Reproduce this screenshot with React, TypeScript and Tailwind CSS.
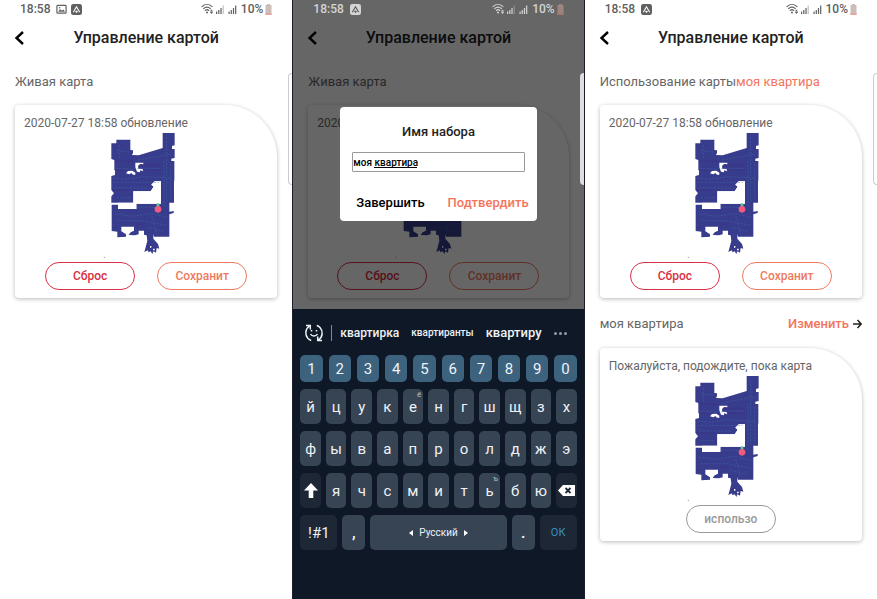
import type { ReactNode } from "react";
import clsx from "clsx";

function FloorMap() {
  return (
    <svg viewBox="330 94 201 366" className="mx-auto block h-[122px] w-[67px] overflow-visible" role="img" aria-label="Карта">
      <path
        fill="#383c8c"
        fillRule="evenodd"
        d="M349 117H391V148L399 149V157L396 163L416 164L488 142V97H524V134L516 136V145H524V172L514 174V181H523V240H522V306H508V333L521 331V337L508 341V408H462L460 400V414L474 430L478 444L470 442L468 456L460 452L457 460L452 452L445 455L444 449L433 454L438 436L442 420L440 404L432 402V390H416V401L405 404L386 403L392 395L402 390V378H364V392L378 401V408L352 410V393L335 391V312H354V325H409V309H483V242H464L454 252L461 258L452 272H400V306H334V287L342 278L334 268V226L345 223V208H343V178L334 175V128H349ZM406 186V200L411 213L420 215V209L430 212L428 205L415 204L414 196L420 190L430 191V186ZM378 218L384 211L397 210L406 216V222H399L394 217L388 221Z"
      />
      <path d="M483 242V309H409V325H354V306H400V272H452L461 258 454 252 464 242Z" fill="#fff" />
      <g fill="none" stroke="#3f70a6" strokeWidth="2" opacity=".65">
        <path d="M340 245H475M345 262H440M350 291H392M340 232L380 236L430 228L512 232M415 178L484 165L515 160M500 110V300M492 180V318M512 190V292M350 150L388 155M345 340L400 347L450 338L502 350M350 360H430L500 374M412 320H475M455 345L470 400M440 380L490 392M358 132V174M346 204H480" strokeDasharray="7 4" />
      </g>
      <g fill="none" stroke="#43257b" strokeWidth="3" opacity=".7">
        <path d="M344 182H400M344 208L372 209M420 194H478M428 208H482M339 268H390M440 436L466 440M338 380H350M410 370H434" strokeDasharray="5 3" />
      </g>
      <path d="M470 308H478V320H470Z" fill="#65c59b" />
      <circle cx="474" cy="326" r="10" fill="#f15b7e" />
      <path d="M450 436h4v5h-4zM459 444h5v5h-5z" fill="#fff" />
      <circle cx="313" cy="470" r="2" fill="#999" />
    </svg>
  );
}

function AppBadge() {
  return (
    <svg viewBox="0 0 12 12" className="size-[11px]" aria-hidden="true">
      <rect width="12" height="12" rx="2.5" fill="currentColor" />
      <path d="M2.5 9 6 3l3.5 6M5 7.5 6 9l1-1.5" fill="none" stroke="var(--color-badge, #fff)" strokeWidth="1.2" />
    </svg>
  );
}

function PictureIcon() {
  return (
    <svg viewBox="0 0 12 12" className="size-[11px]" aria-hidden="true">
      <rect x="1" y="1.5" width="10" height="8.5" rx=".8" fill="none" stroke="currentColor" strokeWidth="1.3" />
      <path d="m2.5 8.5 2-3 1.8 1.8L8 6l1.8 2.5Z" fill="currentColor" />
      <circle cx="4" cy="4" r=".8" fill="currentColor" />
    </svg>
  );
}

function SignalIcons() {
  return (
    <svg viewBox="0 0 38 12" className="h-3 w-[38px]" aria-hidden="true">
      <g fill="none" stroke="currentColor" strokeWidth="1.1" strokeLinecap="round">
        <path d="M1 3.6C4 .8 8 .8 11 3.6M2.6 5.6c2-2 4.8-2 6.8 0M4.3 7.5c1-1 2.4-1 3.4 0" />
      </g>
      <circle cx="6" cy="9.4" r="1" fill="currentColor" />
      <path d="m10.5 6.5 1.6 2h-3.2zM10.5 11l1.6-2h-3.2z" fill="currentColor" />
      <path d="M15 8.5h1.2V11H15zM17.2 7h1.2v4h-1.2zM19.4 5h1.2v6h-1.2z" fill="currentColor" />
      <path d="M21.6 2.5h1.2V11h-1.2z" fill="currentColor" opacity=".4" />
      <path d="M27.5 8.5h1.2V11h-1.2zM29.7 7h1.2v4h-1.2zM31.9 5h1.2v6h-1.2zM34.1 2.5h1.2V11h-1.2z" fill="currentColor" />
    </svg>
  );
}

function StatusBar({ picture, light }: { picture?: boolean; light?: boolean }) {
  return (
    <div
      className={clsx(
        "relative z-10 flex h-[18px] items-center px-5 text-[12px] leading-[18px] font-medium",
        light ? "text-[#d4d4d4] [--color-badge:#555]" : "text-[#606060]",
      )}
    >
      <span className="mr-1.5">18:58</span>
      <span className="flex gap-1">
        {picture && <PictureIcon />}
        <AppBadge />
      </span>
      <span className="ml-auto flex items-center gap-0.5">
        <SignalIcons />
        <span>10%</span>
        <svg viewBox="0 0 7 11" className="h-[11px] w-[7px]" aria-hidden="true">
          <path d="M2 0h3v1h1.500v10h-6V1H2z" fill={light ? "#9c8580" : "#cdbdb9"} />
          <path d="M.5 9h6v2h-6z" fill={light ? "#a9776c" : "#e3a79f"} />
        </svg>
      </span>
    </div>
  );
}

function TitleBar() {
  return (
    <header className="relative flex h-10 items-center justify-center">
      <button type="button" aria-label="Назад" className="absolute left-3.5 text-black">
        <svg viewBox="0 0 11 16" className="h-4 w-[11px]" aria-hidden="true">
          <path d="M9 2 2.500 8 9 14" fill="none" stroke="currentColor" strokeWidth="2.4" />
        </svg>
      </button>
      <h1 className="text-[16px] leading-6 font-medium text-[#222]">Управление картой</h1>
    </header>
  );
}

const tones = {
  red: "border-[#d92f43] text-[#d92f43]",
  orange: "border-[#ee7a60] text-[#ee7a60]",
  gray: "border-[#999] text-[#999]",
};

function PillButton({ tone, children }: { tone: keyof typeof tones; children: ReactNode }) {
  return (
    <button type="button" className={clsx("h-7 w-[90px] rounded-full border text-[12px] leading-5 font-medium", tones[tone])}>
      {children}
    </button>
  );
}

function MapCard({ caption, children }: { caption: string; children: ReactNode }) {
  return (
    <section className="rounded-[4px] rounded-tr-[52px] bg-white pt-[9px] pb-2 shadow-[0_1px_4px_rgba(0,0,0,0.28)]">
      <p className="pl-[9px] text-[12px] leading-[18px] text-[#666]">{caption}</p>
      <div className="pr-1.5">
        <FloorMap />
      </div>
      <div className="mt-2 flex justify-center gap-[22px]">{children}</div>
    </section>
  );
}

function LiveCard() {
  return (
    <MapCard caption="2020-07-27 18:58 обновление">
      <PillButton tone="red">Сброс</PillButton>
      <PillButton tone="orange">Сохранит</PillButton>
    </MapCard>
  );
}

function Screen({ label, picture, light, children }: { label: ReactNode; picture?: boolean; light?: boolean; children?: ReactNode }) {
  return (
    <>
      <StatusBar picture={picture} light={light} />
      <TitleBar />
      <div className="px-[15px] pb-[11px]">
        <h2 className="mt-3 mb-[11px] text-[13px] leading-6 whitespace-nowrap text-[#666]">{label}</h2>
        <LiveCard />
        {children}
      </div>
    </>
  );
}

function EdgeHandle({ className }: { className: string }) {
  return <div className={clsx("absolute top-[73px] right-0 z-10 h-28 w-1 rounded-l-[4px]", className)} />;
}

function NameDialog() {
  return (
    <div role="dialog" aria-labelledby="set-name" className="absolute inset-x-[47px] top-[107px] rounded-[4px] bg-white px-3 pt-[15px] pb-1.5">
      <label id="set-name" htmlFor="name" className="block text-center text-[13px] leading-5 font-medium text-[#222]">
        Имя набора
      </label>
      <div className="relative mt-2.5">
        <input
          id="name"
          defaultValue="моя квартира"
          className="block h-5 w-full rounded-[1px] border border-[#999] text-[10px] leading-4 font-medium text-black outline-none"
        />
        <span className="absolute top-[15px] left-[22px] h-px w-[43px] bg-black" />
      </div>
      <div className="mt-[19px] flex justify-between text-[13px] leading-6 font-medium">
        <button type="button" className="ml-1 text-black">Завершить</button>
        <button type="button" className="-mr-1 text-[#f4745c]">Подтвердить</button>
      </div>
    </div>
  );
}

const digits = [..."1234567890"];
const rows = [[..."йцукенгшщзх"], [..."фывапролджэ"], [..."ячсмитьбю"]];
const hints: Record<string, string> = { е: "ё", ь: "ъ" };

function Key({ children, className, label }: { children: ReactNode; className?: string; label?: string }) {
  return (
    <button
      type="button"
      aria-label={label}
      className={clsx("relative flex h-[35px] min-w-0 items-center justify-center rounded-[5px] text-[15px] leading-4", className)}
    >
      {children}
    </button>
  );
}

function LetterKey({ letter }: { letter: string }) {
  return (
    <Key className="flex-1 bg-[#364454]">
      {letter}
      {hints[letter] && <span className="absolute top-0.5 right-0.5 text-[8px] leading-[7px] text-[#b8c0c8]">{hints[letter]}</span>}
    </Key>
  );
}

function Keyboard() {
  return (
    <div className="flex-1 bg-[#0e1826] px-[7px] text-[#eef2f6]">
      <div className="flex h-[46px] items-center pt-0.5 pl-1 font-medium">
        <button type="button" aria-label="Эмодзи">
          <svg viewBox="0 0 20 20" className="size-5" fill="none" stroke="currentColor" strokeWidth="1.5" aria-hidden="true">
            <path d="M5.500 3C1 6 .8 12 4 15.500c1 1 2 1.600 3.200 2M2 2.500h4.300v4M14.500 17c4.500-3 4.700-9 1.500-12.500-1-1-2-1.600-3.200-2M18 17.500h-4.300v-4" />
            <path d="M6.500 11c1.500 2.600 5.500 2.600 7 0" />
            <path d="M7.500 7v1.500M12.500 7v1.500" />
          </svg>
        </button>
        <span className="ml-[7px] h-4 w-px bg-[#7d8690]" />
        <div className="ml-2 flex flex-1 items-center justify-between pr-2.5 leading-5">
          <button type="button" className="text-[12px]">квартирка</button>
          <button type="button" className="text-[10px]">квартиранты</button>
          <button type="button" className="text-[13px]">квартиру</button>
          <button type="button" aria-label="Ещё" className="flex gap-0.5">
            <span className="size-[3px] rounded-full bg-[#929ba5]" />
            <span className="size-[3px] rounded-full bg-[#929ba5]" />
            <span className="size-[3px] rounded-full bg-[#929ba5]" />
          </button>
        </div>
      </div>
      <div className="flex gap-1.5">
        {digits.map((d) => (
          <button key={d} type="button" className="h-[27px] min-w-0 flex-1 rounded-[5px] bg-[#3c627e] text-[15px] leading-5">
            {d}
          </button>
        ))}
      </div>
      <div className="mt-[7px] flex flex-col gap-[7px]">
        <div className="flex gap-[5px]">{rows[0].map((l) => <LetterKey key={l} letter={l} />)}</div>
        <div className="flex gap-[5px]">{rows[1].map((l) => <LetterKey key={l} letter={l} />)}</div>
        <div className="flex gap-[5px]">
          <Key className="flex-1 bg-[#1d2736]" label="Shift">
            <svg viewBox="0 0 14 15" className="h-[15px] w-3.5" aria-hidden="true">
              <path d="M7 0 14 7.500H9.300V15H4.700V7.500H0z" fill="#fff" />
            </svg>
          </Key>
          {rows[2].map((l) => <LetterKey key={l} letter={l} />)}
          <Key className="flex-1 bg-[#1d2736]" label="Удалить">
            <svg viewBox="0 0 17 11" className="h-[11px] w-[17px]" aria-hidden="true">
              <path d="M5 0h12v11H5L0 5.500z" fill="#fff" />
              <path d="m7.500 3 5 5m0-5-5 5" stroke="#1d2736" strokeWidth="1.800" />
            </svg>
          </Key>
        </div>
        <div className="flex gap-[5px]">
          <Key className="w-[37px] bg-[#1d2736]">!#1</Key>
          <Key className="w-[23px] bg-[#364454] font-bold">,</Key>
          <Key className="flex-1 gap-1.5 bg-[#364454]">
            <svg viewBox="0 0 4 6" className="h-1.5 w-1" aria-hidden="true"><path d="M4 0v6L0 3z" fill="#fff" /></svg>
            <span className="text-[10px]">Русский</span>
            <svg viewBox="0 0 4 6" className="h-1.5 w-1" aria-hidden="true"><path d="M0 0v6l4-3z" fill="#fff" /></svg>
          </Key>
          <Key className="w-[23px] bg-[#364454] font-bold">.</Key>
          <Key className="w-[37px] bg-[#1d2736] text-[#3a8fc4]"><span className="text-[11px]">ОК</span></Key>
        </div>
      </div>
    </div>
  );
}

export default function App() {
  return (
    <main className="grid min-h-screen grid-cols-3 bg-white font-['Roboto','Noto_Sans',sans-serif]">
      <div className="relative">
        <Screen label="Живая карта" picture />
        <EdgeHandle className="border border-r-0 border-[#ccc] bg-white" />
      </div>
      <div className="flex flex-col border-x border-[#1b1f2b]">
        <div className="relative">
          <Screen label="Живая карта" light />
          <div className="absolute inset-0 bg-black/60" />
          <EdgeHandle className="bg-[#ddd]" />
          <NameDialog />
        </div>
        <Keyboard />
      </div>
      <div className="relative">
        <Screen
          label={
            <>
              Использование карты<span className="text-[#f4745c]">моя квартира</span>
            </>
          }
        >
          <div className="mt-3.5 mb-3 flex items-center justify-between text-[13px] leading-6">
            <h2 className="text-[#666]">моя квартира</h2>
            <button type="button" className="flex items-center gap-1 font-medium text-[#f4745c]">
              Изменить
              <svg viewBox="0 0 9 10" className="h-2.5 w-[9px]" fill="none" stroke="#222" strokeWidth="1.500" aria-hidden="true">
                <path d="M0 5h8M4.500 1l3.700 4-3.700 4" />
              </svg>
            </button>
          </div>
          <MapCard caption="Пожалуйста, подождите, пока карта">
            <PillButton tone="gray">использо</PillButton>
          </MapCard>
        </Screen>
        <EdgeHandle className="border border-r-0 border-[#ccc] bg-white" />
      </div>
    </main>
  );
}
